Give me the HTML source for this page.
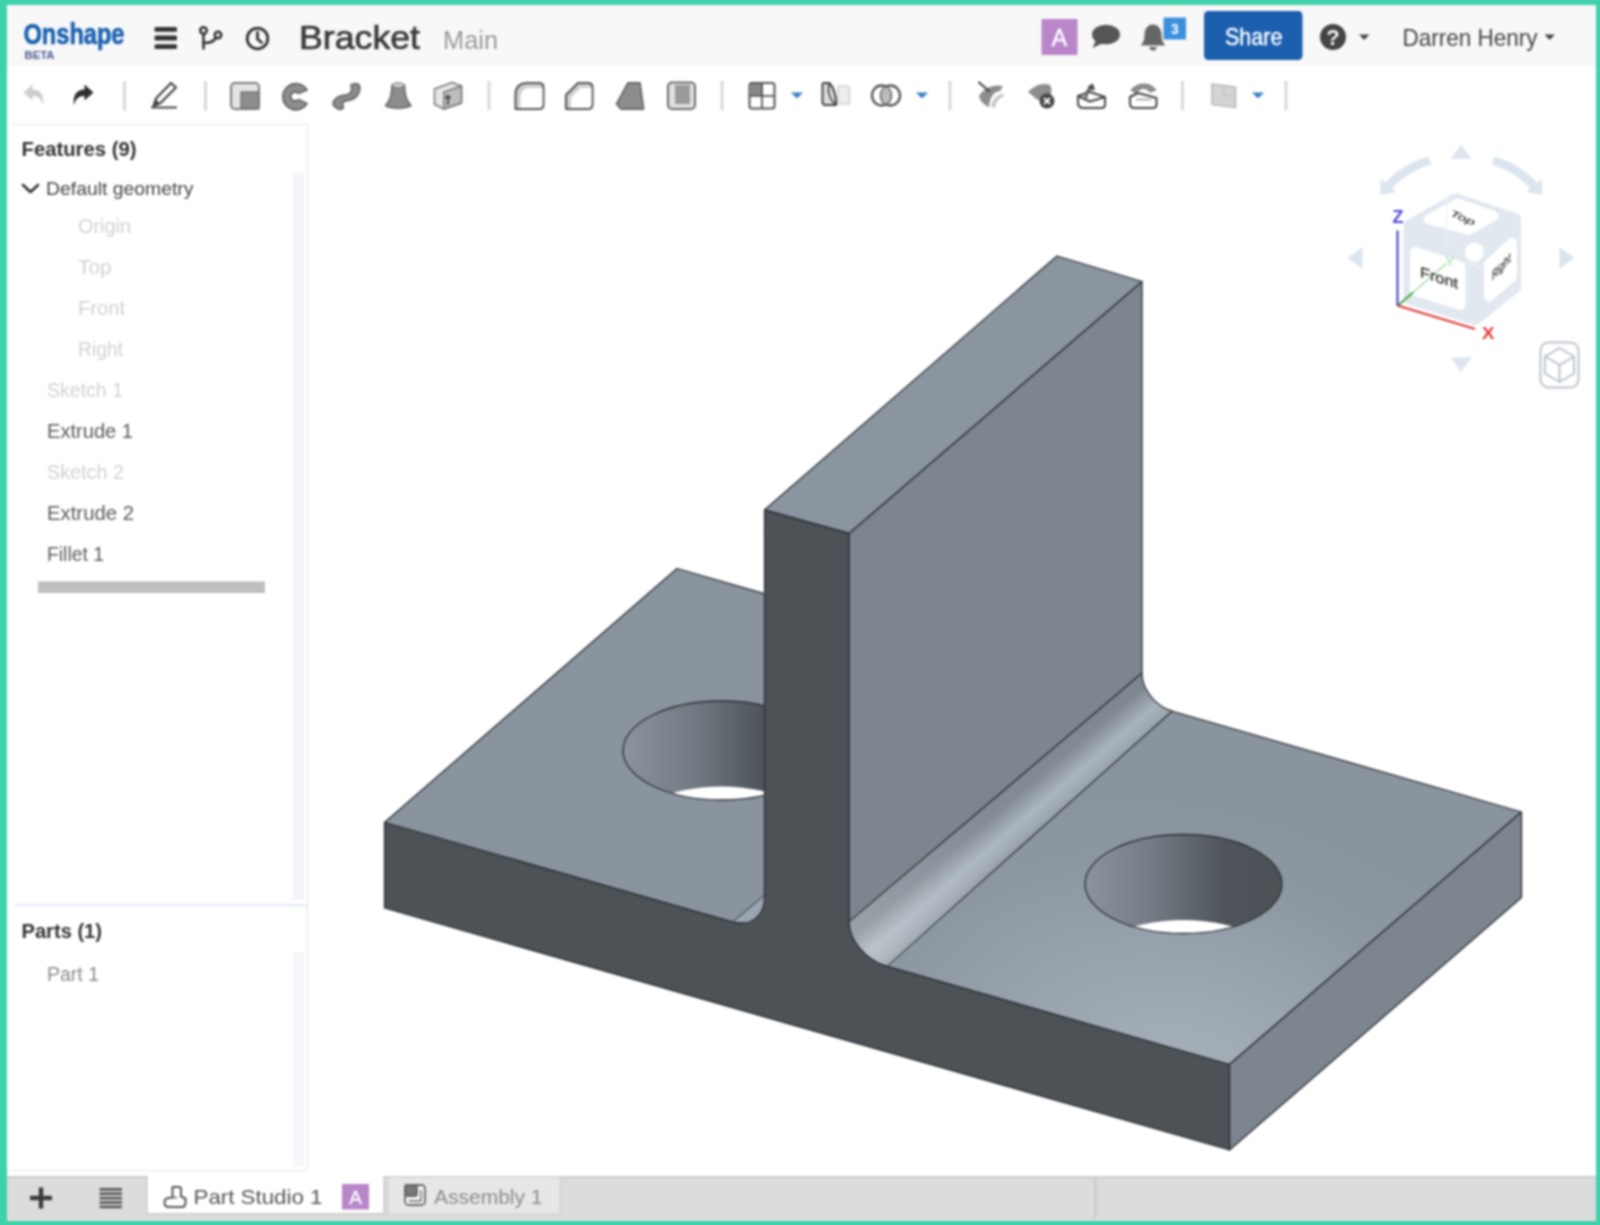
<!DOCTYPE html>
<html>
<head>
<meta charset="utf-8">
<title>Bracket</title>
<style>
html,body{margin:0;padding:0;}
html{background:#3fd1a9;}
#wrap{position:absolute;left:0;top:0;width:1600px;height:1225px;filter:blur(0.9px);}
body{width:1600px;height:1225px;overflow:hidden;background:#3fd1a9;font-family:"Liberation Sans",sans-serif;position:relative;}
.abs{position:absolute;}
.t{position:absolute;white-space:nowrap;line-height:1;}
#app{position:absolute;left:7px;top:5px;width:1589px;height:1215.5px;background:#fff;overflow:hidden;}
#hdr{position:absolute;left:7px;top:5px;width:1589px;height:61px;background:#f8f8f8;}
#tabbar{position:absolute;left:7px;top:1176px;width:1589px;height:44.5px;background:#dcdcdc;}
#panel{position:absolute;left:10px;top:124px;width:298px;height:1047px;border:1px solid #e3e8ee;border-left:none;box-sizing:border-box;background:#fff;}
.sep{position:absolute;width:2px;height:28px;top:82px;background:#d4d4d4;}
</style>
</head>
<body>
<div id="wrap">
<div id="app"></div>
<div id="hdr"></div>
<div id="panel"></div>
<div id="tabbar"></div>

<!-- HEADER -->
<svg class="abs" style="left:0;top:0" width="1600" height="1225" viewBox="0 0 1600 1225" font-family="Liberation Sans, sans-serif">
<!-- logo -->
<text x="23.5" y="44.3" font-size="30" font-weight="bold" fill="#1b62b0" stroke="#1b62b0" stroke-width="0.7" textLength="101" lengthAdjust="spacingAndGlyphs">Onshape</text>
<text x="24.5" y="58.5" font-size="10.5" font-weight="bold" fill="#4b5a92" textLength="30" lengthAdjust="spacingAndGlyphs">BETA</text>
<!-- hamburger -->
<g fill="#333"><rect x="154.500" y="27" width="22.500" height="4.800" rx="1.500"/><rect x="154.500" y="35.600" width="22.500" height="4.800" rx="1.500"/><rect x="154.500" y="44.200" width="22.500" height="4.800" rx="1.500"/></g>
<!-- branch icon -->
<g fill="none" stroke="#333" stroke-width="2.6" stroke-linecap="round"><circle cx="203.5" cy="30.5" r="3.2"/><path d="M203.5,34 V48.5"/><path d="M203.5,43 C210,43 214,42 215.5,38"/><circle cx="218" cy="35" r="3.2"/></g>
<!-- clock icon -->
<g fill="none" stroke="#333" stroke-width="2.8" stroke-linecap="round" stroke-linejoin="round"><circle cx="257.5" cy="38.5" r="10.3"/><path d="M257.5,32.5 V39 L261.5,42.5"/></g>
<!-- title -->
<text x="299" y="48.5" font-size="33" fill="#3a3a3a" stroke="#3a3a3a" stroke-width="0.7" textLength="121" lengthAdjust="spacingAndGlyphs">Bracket</text>
<text x="443" y="48.5" font-size="26" fill="#9a9a9a" textLength="55" lengthAdjust="spacingAndGlyphs">Main</text>
<!-- A avatar -->
<rect x="1041.5" y="19" width="36" height="36" fill="#b886c9"/>
<text x="1059.5" y="46" font-size="23" fill="#fff" text-anchor="middle" stroke="#fff" stroke-width="0.4">A</text>
<!-- chat -->
<g fill="#555"><ellipse cx="1106" cy="34.5" rx="14" ry="9.8"/><path d="M1096,40 L1092.5,48 L1103,43 Z"/></g>
<!-- bell -->
<g fill="#666"><path d="M1153,24.5 C1159,24.5 1161.5,30 1161.5,35 C1161.5,40 1163,43 1165.5,45.5 L1140.5,45.5 C1143,43 1144.5,40 1144.5,35 C1144.5,30 1147,24.5 1153,24.5 Z"/><path d="M1149.5,47 A3.5,3.5 0 0 0 1156.5,47 Z"/></g>
<rect x="1163.5" y="17.5" width="22.5" height="22" fill="#3c8fdd"/>
<text x="1174.8" y="34" font-size="14" font-weight="bold" fill="#fff" text-anchor="middle">3</text>
<!-- share -->
<rect x="1204" y="11" width="98.5" height="49" rx="4.5" fill="#1b5fae"/>
<text x="1225" y="45" font-size="24" fill="#fff" stroke="#fff" stroke-width="0.4" textLength="57.5" lengthAdjust="spacingAndGlyphs">Share</text>
<!-- help -->
<circle cx="1333" cy="37" r="13" fill="#444"/>
<text x="1333" y="45" font-size="22" font-weight="bold" fill="#f8f8f8" text-anchor="middle">?</text>
<path d="M1359,34.5 L1369.5,34.5 L1364.2,40 Z" fill="#444"/>
<text x="1402.5" y="46" font-size="24" fill="#444" textLength="135" lengthAdjust="spacingAndGlyphs">Darren Henry</text>
<path d="M1544.5,34.5 L1555,34.5 L1549.7,40 Z" fill="#444"/>
</svg>

<!-- /HEADER -->
<!-- TOOLBAR -->
<svg class="abs" style="left:0;top:0" width="1600" height="1225" viewBox="0 0 1600 1225">
<!-- separators -->
<g fill="#d9d9d9"><rect x="123" y="81" width="3" height="29.5"/><rect x="204" y="81" width="3" height="29.5"/><rect x="487.5" y="81" width="3" height="29.5"/><rect x="720.5" y="81" width="3" height="29.5"/><rect x="948.5" y="81" width="3" height="29.5"/><rect x="1181" y="81" width="3" height="29.5"/><rect x="1284.5" y="81" width="3" height="29.5"/></g>
<!-- undo (light) -->
<path d="M23.5,92.5 L32.5,84.5 L32.5,89.5 C40,89.5 44.5,94.5 43,105.5 C41.5,99 38.5,96 32.5,96 L32.5,100.5 Z" fill="#cdcdcd"/>
<!-- redo (dark) -->
<path d="M93.5,92.5 L84.5,84.5 L84.5,89.5 C77,89.5 72.5,94.5 74,105.5 C75.5,99 78.5,96 84.5,96 L84.5,100.5 Z" fill="#2f2f2f"/>
<!-- pencil -->
<g fill="none" stroke="#444" stroke-width="2.2" stroke-linejoin="round" stroke-linecap="round"><path d="M153.5,106 L156,98.5 L171,83 L176,87.5 L160.5,103 Z"/><path d="M152,107.5 H176"/></g>
<path d="M152.5,107 L155.5,99 L160,103.5 Z" fill="#444"/>
<!-- extrude -->
<g><rect x="231" y="83" width="28" height="26" rx="4" fill="#e4e4e4" stroke="#7a7a7a" stroke-width="2"/><rect x="241" y="92" width="18" height="17" fill="#8d8d8d" stroke="#6a6a6a" stroke-width="1.2"/></g>
<!-- revolve -->
<path d="M307,90 A13,13 0 1 0 307,103.5 L298.5,99.5 A4.5,4.5 0 1 1 298.5,93.5 Z" fill="#8d8d8d" stroke="#666" stroke-width="1.8" stroke-linejoin="round"/>
<!-- sweep -->
<path d="M337,108 C328,104 336,96 346,95 C353,94 352,88 351,85 C356,82 361,84 359.5,90 C358,98 352,100 345,101 C340,102 344,105 343,108 C341,110 338,109.5 337,108 Z" fill="#8d8d8d" stroke="#666" stroke-width="1.8" stroke-linejoin="round"/>
<!-- loft -->
<path d="M392,85 C392,96 389,102 385.5,105.5 C391,109 405,109 411,105.5 C407.5,102 404.5,96 404.5,85 C401,82.5 395,82.5 392,85 Z" fill="#8d8d8d" stroke="#666" stroke-width="1.5" stroke-linejoin="round"/>
<ellipse cx="398.2" cy="85.2" rx="6" ry="2.2" fill="#d8d8d8" stroke="#777" stroke-width="1"/>
<!-- thicken -->
<g stroke="#777" stroke-width="1.5" stroke-linejoin="round"><path d="M434.5,89 L452,82.5 L461.5,86 L461.5,103 L444,109 L434.5,104.5 Z" fill="#e6e6e6"/><path d="M444,92 L461.5,86 L461.5,103 L444,109 Z" fill="#bdbdbd"/><path d="M448,96 V105 M445.5,98.5 L448,95.5 L450.5,98.5" fill="none" stroke="#444" stroke-width="1.8"/></g>
<!-- fillet -->
<g stroke-linejoin="round"><path d="M515.5,109 V95 Q515.5,83 528,83 H539 Q543.5,83 543.5,87.5 V104.5 Q543.5,109 539,109 Z" fill="#cfcfcf" stroke="#555" stroke-width="2"/><path d="M520.5,108 V97 Q520.5,88 530,88 H542.5 V104 Q542.5,108 539,108 Z" fill="#fff"/></g>
<!-- chamfer -->
<g stroke-linejoin="round"><path d="M566,109 V95 L578,83 H588 Q592.5,83 592.5,87.5 V104.5 Q592.5,109 588,109 Z" fill="#cfcfcf" stroke="#555" stroke-width="2"/><path d="M571,108 V97.5 L580.5,88 H591.5 V104 Q591.5,108 588,108 Z" fill="#fff"/></g>
<!-- draft -->
<path d="M616.5,104 L628,83 H640 L643.5,109 H621 Z" fill="#8d8d8d" stroke="#666" stroke-width="1.8" stroke-linejoin="round"/>
<!-- shell -->
<g><rect x="668" y="82.5" width="27" height="26.5" rx="4" fill="#e0e0e0" stroke="#6a6a6a" stroke-width="2"/><rect x="675" y="85" width="15" height="19" fill="#9a9a9a"/></g>
<!-- pattern -->
<g><rect x="749.5" y="83" width="25" height="25.5" rx="2.5" fill="#fff" stroke="#555" stroke-width="2"/><rect x="750.5" y="84" width="11.5" height="11.5" fill="#888"/><path d="M762,83 V108.5 M749.5,95.8 H774.5" stroke="#555" stroke-width="1.8"/></g>
<!-- carets -->
<g fill="#3a7ec6"><path d="M791,92.5 H803 L797,98.5 Z"/><path d="M916,92.5 H928 L922,98.5 Z"/><path d="M1252,92.5 H1264 L1258,98.5 Z"/></g>
<!-- mirror -->
<g stroke-linejoin="round"><path d="M838,86 H846 Q849.5,86 849.5,90 V104 H838 Z" fill="#eee" stroke="#d2d2d2" stroke-width="1.6"/><path d="M824,83 H829.5 C834,88 836.5,97 836,105 H825.5 Q822.5,105 822.5,102 V85 Q822.5,83 824,83 Z" fill="#ddd" stroke="#444" stroke-width="2"/><path d="M829.5,83 C827,90 829,99 836,105" fill="none" stroke="#444" stroke-width="1.6"/></g>
<!-- boolean -->
<g fill="none" stroke="#555" stroke-width="2.3"><ellipse cx="881.5" cy="95.5" rx="9.5" ry="10"/><ellipse cx="890.5" cy="95.5" rx="9.5" ry="10"/></g>
<path d="M886,86.8 A9.5,10 0 0 1 886,104.2 A9.5,10 0 0 1 886,86.8 Z" fill="#bbb"/>
<!-- split -->
<g><path d="M979,96 C984,88 993,84 1003,86 L1000,91 C992,92 990,99 989,107 C984,105 980,101 979,96 Z" fill="#8d8d8d"/><path d="M991,107 C992,100 996,95 1004,93 L1003,97 C998,99 996,103 995,108 Z" fill="#c9c9c9"/><path d="M979,82.5 L989,91" stroke="#444" stroke-width="2.2" stroke-linecap="round"/></g>
<!-- delete face -->
<g><path d="M1028,92 C1034,86 1042,82 1050,85 C1053,90 1051,97 1047,100 C1041,101 1036,100 1034,97 Z" fill="#8d8d8d"/><circle cx="1047" cy="101" r="7.5" fill="#444"/><path d="M1044,98 L1050,104 M1050,98 L1044,104" stroke="#fff" stroke-width="2"/></g>
<!-- move face -->
<g fill="none" stroke="#444" stroke-width="2" stroke-linejoin="round"><path d="M1078,96 L1090,92 L1105,97 V104.5 Q1105,108 1101,108 H1084 Q1078,108 1078,103 Z" fill="#fff"/><path d="M1078,96 L1090,101.5 L1105,97" /><path d="M1086,98 C1086,92 1089,89 1092,88" stroke="#666" stroke-width="3"/><path d="M1088,87 L1092.5,84 L1094.5,90 Z" fill="#444" stroke-width="1"/></g>
<!-- offset surface -->
<g stroke-linejoin="round"><path d="M1131,90 C1138,82 1150,82 1156,90 L1150,92 C1145,86 1140,88 1136,93 Z" fill="#8d8d8d" stroke="#777" stroke-width="1"/><path d="M1130,97 L1138,93 L1156.5,98 V104.500 Q1156.5,108 1152.5,108 H1135 Q1130,108 1130,103.500 Z" fill="#fff" stroke="#444" stroke-width="2"/><path d="M1136,99.500 H1151" stroke="#aaa" stroke-width="1.8"/></g>
<!-- plane -->
<path d="M1212,84 L1235.500,87 V107.500 L1212,104.500 Z" fill="#d4d4d4" stroke="#b9b9b9" stroke-width="1.6" stroke-linejoin="round"/>
<path d="M1223.500,95 H1235 M1223.500,95 V86" stroke="#bcbcbc" stroke-width="1" fill="none"/>
</svg>

<!-- /TOOLBAR -->
<!-- PANEL -->
<svg class="abs" style="left:0;top:0" width="1600" height="1225" viewBox="0 0 1600 1225" font-family="Liberation Sans, sans-serif">
<!-- scroll tracks -->
<rect x="293" y="172" width="11" height="728" fill="#f3f5f9"/>
<rect x="293" y="952" width="11" height="215" fill="#f5f7fa"/>
<!-- divider -->
<rect x="15" y="904.5" width="293" height="1.6" fill="#d9e4ef"/>
<text x="21.5" y="155.5" font-size="20" font-weight="bold" fill="#333" textLength="115" lengthAdjust="spacingAndGlyphs">Features (9)</text>
<path d="M23,185 L30.500,192 L38,185" fill="none" stroke="#333" stroke-width="2.6" stroke-linecap="round" stroke-linejoin="round"/>
<text x="46" y="194.5" font-size="19" fill="#444" textLength="147.500" lengthAdjust="spacingAndGlyphs">Default geometry</text>
<g font-size="20" fill="#d2d2d2">
<text x="78" y="232.5" textLength="53" lengthAdjust="spacingAndGlyphs">Origin</text>
<text x="78" y="273.5" textLength="33.500" lengthAdjust="spacingAndGlyphs">Top</text>
<text x="78" y="314.5" textLength="47" lengthAdjust="spacingAndGlyphs">Front</text>
<text x="78" y="355.5" textLength="45" lengthAdjust="spacingAndGlyphs">Right</text>
<text x="47" y="396.5" textLength="76" lengthAdjust="spacingAndGlyphs">Sketch 1</text>
<text x="47" y="478.5" textLength="77" lengthAdjust="spacingAndGlyphs">Sketch 2</text>
</g>
<g font-size="20" fill="#5a5a5a">
<text x="47" y="437.5" textLength="86" lengthAdjust="spacingAndGlyphs">Extrude 1</text>
<text x="47" y="519.5" textLength="87" lengthAdjust="spacingAndGlyphs">Extrude 2</text>
<text x="47" y="560.5" textLength="57" lengthAdjust="spacingAndGlyphs">Fillet 1</text>
</g>
<rect x="38" y="581.500" width="227" height="11.500" fill="#bebebe"/>
<text x="21.500" y="937.500" font-size="20" font-weight="bold" fill="#333" textLength="80.500" lengthAdjust="spacingAndGlyphs">Parts (1)</text>
<text x="47" y="981" font-size="20" fill="#8a8a8a" textLength="52" lengthAdjust="spacingAndGlyphs">Part 1</text>
</svg>

<!-- /PANEL -->
<!-- TABS -->
<svg class="abs" style="left:0;top:0" width="1600" height="1225" viewBox="0 0 1600 1225" font-family="Liberation Sans, sans-serif">
<rect x="7" y="1176" width="1589" height="2.200" fill="#cdcdcd"/>
<!-- plus -->
<path d="M41,1187.500 V1208.500 M30,1198 H52" stroke="#3a3a3a" stroke-width="4.400"/>
<!-- list icon -->
<g fill="#555"><rect x="99.500" y="1188" width="22.500" height="2.600"/><rect x="99.500" y="1192.400" width="22.500" height="2.600"/><rect x="99.500" y="1196.800" width="22.500" height="2.600"/><rect x="99.500" y="1201.200" width="22.500" height="2.600"/><rect x="99.500" y="1205.600" width="22.500" height="2.600"/></g>
<!-- active tab -->
<rect x="147" y="1174" width="237" height="39.500" fill="#fff"/>
<rect x="146" y="1176" width="1.500" height="37.500" fill="#c6c6c6"/><rect x="383.500" y="1176" width="1.500" height="37.500" fill="#c6c6c6"/><rect x="146" y="1213" width="239" height="1.500" fill="#c9c9c9"/>
<!-- part studio icon -->
<g fill="none" stroke="#555" stroke-width="2" stroke-linejoin="round"><path d="M172.500,1187 H179 Q181,1187 181,1189 V1196.500 L185.500,1198.500 V1203 Q185.500,1207 181.500,1207 H169 Q164.500,1207 164.500,1202.500 Q164.500,1198.500 168.500,1198 L172.500,1197.500 Z"/><path d="M172.500,1197.500 H177" stroke-width="1.400"/></g>
<text x="193.500" y="1204" font-size="21" fill="#555" textLength="129" lengthAdjust="spacingAndGlyphs">Part Studio 1</text>
<rect x="342" y="1184" width="27" height="25.500" fill="#b886c9"/>
<text x="355.500" y="1203.500" font-size="19" fill="#fff" text-anchor="middle" stroke="#fff" stroke-width="0.300">A</text>
<!-- assembly tab -->
<rect x="388" y="1177" width="172" height="37" fill="#e7e7e7" stroke="#d2d2d2" stroke-width="1.200"/>
<g fill="none" stroke="#666" stroke-width="1.800" stroke-linejoin="round"><rect x="405" y="1185" width="20" height="20" rx="3.500" fill="#f4f4f4"/><rect x="405" y="1185" width="12" height="11" rx="1.500" fill="#777"/><path d="M409,1201 H421 V1190" stroke-width="1.400"/></g>
<text x="434" y="1203.500" font-size="21" fill="#8c8c8c" textLength="108.500" lengthAdjust="spacingAndGlyphs">Assembly 1</text>
<rect x="1094.500" y="1177" width="1.800" height="41" fill="#c6c6c6"/>
</svg>

<!-- /TABS -->
<!-- MODEL -->
<svg class="abs" style="left:0;top:0" width="1600" height="1225" viewBox="0 0 1600 1225">
<defs>
<radialGradient id="gtop" gradientUnits="userSpaceOnUse" cx="1185" cy="1085" r="290" gradientTransform="rotate(16 1185 1085) translate(1185 1085) scale(1.45 1) translate(-1185 -1085)"><stop offset="0" stop-color="#a9b3bc"/><stop offset="0.35" stop-color="#9ca6b0"/><stop offset="0.75" stop-color="#8d97a1"/><stop offset="1" stop-color="#8a949e"/></radialGradient>
<linearGradient id="gfil" gradientUnits="userSpaceOnUse" x1="995.5" y1="797.5" x2="1032" y2="840"><stop offset="0" stop-color="#7d858f"/><stop offset="0.22" stop-color="#7f8791"/><stop offset="0.62" stop-color="#a8b3bd"/><stop offset="0.82" stop-color="#9da7b1"/><stop offset="1" stop-color="#8d97a1"/></linearGradient>
<linearGradient id="gfil2" gradientUnits="userSpaceOnUse" x1="868" y1="944" x2="1157" y2="692"><stop offset="0" stop-color="#fff" stop-opacity="0.22"/><stop offset="0.45" stop-color="#fff" stop-opacity="0.04"/><stop offset="1" stop-color="#fff" stop-opacity="0"/></linearGradient>
<linearGradient id="gholeR" gradientUnits="userSpaceOnUse" x1="1085" y1="0" x2="1282" y2="0"><stop offset="0" stop-color="#8b959f"/><stop offset="0.35" stop-color="#737a83"/><stop offset="0.7" stop-color="#50555b"/><stop offset="1" stop-color="#4d5257"/></linearGradient>
<linearGradient id="gholeL" gradientUnits="userSpaceOnUse" x1="623" y1="0" x2="820" y2="0"><stop offset="0" stop-color="#8b959f"/><stop offset="0.35" stop-color="#737a83"/><stop offset="0.7" stop-color="#50555b"/><stop offset="1" stop-color="#4d5257"/></linearGradient>
<clipPath id="chR"><ellipse cx="1183.5" cy="884" rx="98.5" ry="49.5"/></clipPath>
<clipPath id="chL"><ellipse cx="721.5" cy="750.5" rx="98.5" ry="49.5"/></clipPath>
</defs>
<path d="M384.5,822.5 L677.0,568.5 L1521.5,812.0 L1229.5,1064.5 Z" fill="url(#gtop)" stroke="#2b3036" stroke-width="1.3" stroke-linejoin="round"/>
<path d="M1229.5,1064.5 L1521.5,812.0 L1521.5,897.5 L1229.5,1150.0 Z" fill="#7d858f" stroke="#2b3036" stroke-width="1.3" stroke-linejoin="round"/>
<ellipse cx="1183.5" cy="884" rx="98.5" ry="49.5" fill="url(#gholeR)"/>
<ellipse cx="1183.5" cy="969.5" rx="98.5" ry="49.5" fill="#fff" clip-path="url(#chR)"/>
<ellipse cx="1183.5" cy="884" rx="98.5" ry="49.5" fill="none" stroke="#2b3036" stroke-width="1.3"/>
<ellipse cx="721.5" cy="750.5" rx="98.5" ry="49.5" fill="url(#gholeL)"/>
<ellipse cx="721.5" cy="836.0" rx="98.5" ry="49.5" fill="#fff" clip-path="url(#chL)"/>
<ellipse cx="721.5" cy="750.5" rx="98.5" ry="49.5" fill="none" stroke="#2b3036" stroke-width="1.3"/>
<path d="M732.5,922.2 L772.5,888.2 L766.0,880.0 L766.0,925.0 Z" fill="#9ca6b0" stroke="#2b3036" stroke-width="1"/>
<path d="M1142.0,281.5 L849.0,533.5 L849.0,921.9 L1142.0,673.1 Z" fill="#7d858f" stroke="#2b3036" stroke-width="1.3" stroke-linejoin="round"/>
<path d="M1142.0,673.1 C1142.0,689.4 1155.4,706.4 1172.0,711.2 L887.0,966.4 C866.0,960.4 849.0,940.5 849.0,921.9 Z" fill="url(#gfil)" stroke="#2b3036" stroke-width="1.2" stroke-linejoin="round"/>
<path d="M1142.0,673.1 C1142.0,689.4 1155.4,706.4 1172.0,711.2 L887.0,966.4 C866.0,960.4 849.0,940.5 849.0,921.9 Z" fill="url(#gfil2)"/>
<path d="M1057.0,256.0 L1142.0,281.5 L849.0,533.5 L764.5,510.0 Z" fill="#8b959f" stroke="#2b3036" stroke-width="1.3" stroke-linejoin="round"/>
<path d="M764.5,510.0 L849.0,533.5 L849.0,921.9 C849.0,940.5 866.0,960.4 887.0,966.4 L1229.5,1064.5 L1229.5,1150.0 L384.5,908.0 L384.5,822.5 L732.5,922.2 C750.2,927.2 764.5,916.3 764.5,897.7 Z" fill="#4d5257" stroke="#2b3036" stroke-width="1.3" stroke-linejoin="round"/>
</svg>
<!-- /MODEL -->
<!-- CUBE -->
<svg class="abs" style="left:0;top:0" width="1600" height="1225" viewBox="0 0 1600 1225" font-family="Liberation Sans, sans-serif">
<!-- arrows -->
<g fill="#dce5ee">
<path d="M1461,144.500 L1471.500,159 H1450.500 Z"/>
<path d="M1461,372 L1471.500,357.500 H1450.500 Z"/>
<path d="M1347.500,258 L1362.500,247 V269 Z"/>
<path d="M1574.500,258 L1559.500,247 V269 Z"/>
<path d="M1380,195 L1381,179 L1385.500,182.500 C1397,170 1412,161 1428,156.500 L1431,164.500 C1416,169 1403,177 1392.500,188 L1396,192 Z"/>
<path d="M1542.500,195 L1541.500,179 L1537,182.500 C1525.500,170 1510.500,161 1494.500,156.500 L1491.500,164.500 C1506.500,169 1519.500,177 1530,188 L1526.500,192 Z"/>
</g>
<!-- cube body -->
<path d="M1456,200 L1514.500,219.500 V287 L1475,318.500 L1410,298 V226 Z" fill="#e1e8f0" stroke="#e1e8f0" stroke-width="13" stroke-linejoin="round"/>
<!-- top face -->
<path d="M1429,219.500 L1458,203.500 L1493.500,216 L1469,230 Z" fill="#fff" stroke="#fff" stroke-width="10" stroke-linejoin="round"/>
<!-- front face -->
<path d="M1415,252 L1460.500,266.500 V305 L1415,291 Z" fill="#fff" stroke="#fff" stroke-width="10" stroke-linejoin="round"/>
<!-- right face -->
<path d="M1489,264 L1512,243 V277 L1489,296.500 Z" fill="#fff" stroke="#fff" stroke-width="10" stroke-linejoin="round"/>
<circle cx="1474.500" cy="252" r="9.500" fill="#fff"/>
<path d="M1446.500,199 V246 M1465,262 L1486,270" stroke="#eef2f6" stroke-width="1.500" fill="none"/>
<!-- axes -->
<path d="M1397.500,306 L1447,263" stroke="#7fd07f" stroke-width="1.200" opacity="0.8"/>
<path d="M1397.500,306 L1413,292.500" stroke="#3aa83a" stroke-width="1.800"/>
<path d="M1397.500,230.500 V306" stroke="#4a48d4" stroke-width="2.200"/>
<path d="M1397.500,305.500 L1475,329" stroke="#e23a3a" stroke-width="2.200"/>
<text x="1392.500" y="222.500" font-size="18" font-weight="bold" fill="#4a48d4" textLength="11" lengthAdjust="spacingAndGlyphs">Z</text>
<text x="1482" y="339" font-size="17" font-weight="bold" fill="#e23a3a" textLength="12.500" lengthAdjust="spacingAndGlyphs">X</text>
<text x="1445.500" y="266" font-size="13" fill="#a6dca6">Y</text>
<!-- face labels -->
<text transform="translate(1420,277) matrix(1,0.31,0,1,0,0)" font-size="15" fill="#333" stroke="#333" stroke-width="0.3" textLength="38" lengthAdjust="spacingAndGlyphs">Front</text>
<text transform="translate(1449.500,215.500) rotate(23) scale(1,0.62)" font-size="15" fill="#333" stroke="#333" stroke-width="0.3" font-style="italic" textLength="26" lengthAdjust="spacingAndGlyphs">Top</text>
<text transform="translate(1492,281) matrix(0.62,-0.66,0,1,0,0)" font-size="13.5" fill="#333" stroke="#333" stroke-width="0.3" textLength="30" lengthAdjust="spacingAndGlyphs">Right</text>
<!-- small cube button -->
<g fill="none" stroke="#bcc2cc" stroke-width="2" stroke-linejoin="round"><rect x="1540.500" y="342.500" width="38" height="45" rx="8"/><path d="M1559.500,348 L1574,356.500 V373.500 L1559.500,382 L1545,373.500 V356.500 Z"/><path d="M1545,356.500 L1559.500,365 L1574,356.500 M1559.500,365 V382"/></g>
</svg>

<!-- /CUBE -->
</div>
</body>
</html>
